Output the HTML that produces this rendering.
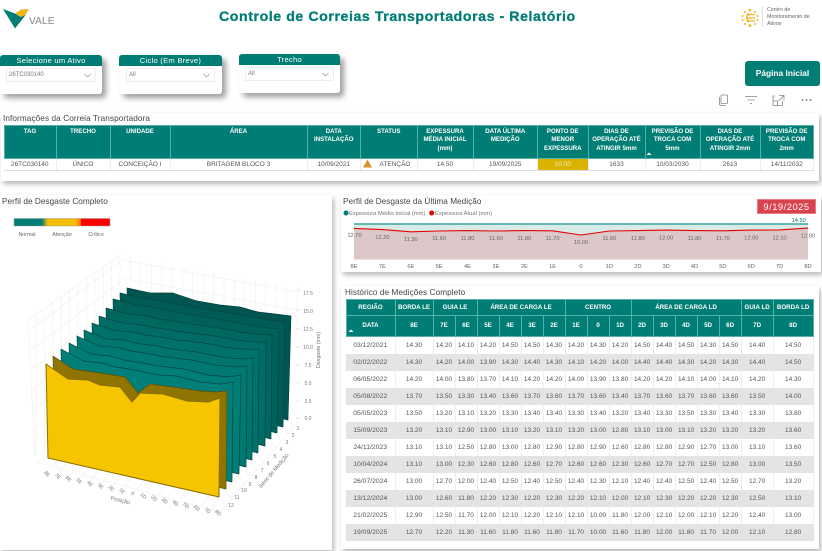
<!DOCTYPE html>
<html lang="pt"><head><meta charset="utf-8"><title>Controle de Correias Transportadoras</title>
<style>
*{box-sizing:border-box}
html,body{margin:0;padding:0;width:822px;height:551px;overflow:hidden;background:#fff}
body{font-family:"Liberation Sans",sans-serif;color:#555}
#r{position:absolute;left:0;top:0;width:822px;height:551px;overflow:hidden;filter:blur(.35px)}
.a{position:absolute;white-space:nowrap}
.card{position:absolute;background:#fff;box-shadow:2px 3px 5px rgba(0,0,0,.28)}
.sl{position:absolute;background:#fff;border-radius:3px;box-shadow:4px 4px 6px rgba(0,0,0,.38);overflow:hidden}
.sl .h{height:11px;background:#007e75;color:#fff;font-size:7.6px;line-height:11px;text-align:center;letter-spacing:.25px}
.sl .d{position:absolute;left:6px;width:90px;top:13px;height:14px;border:1px solid #eee;font-size:6px;line-height:13px;padding-left:2px;color:#777}
.sl svg{position:absolute;right:4px;top:4px}
.t{font-size:8.2px;color:#444}
table{position:absolute;border-collapse:collapse;table-layout:fixed;font-size:6.5px;text-align:center;color:#555}
th{background:#007e75;color:#fff;font-weight:bold;padding:0;border:1px solid #55b0a8;line-height:8.4px;overflow:hidden}
td{padding:0;overflow:hidden;white-space:nowrap}
#t1 th{vertical-align:top;padding-top:2px;font-size:6.1px}
#t1 td{border-right:1px solid #eee;border-bottom:1px solid #ddd;height:12px}
#t2 th{font-size:6.2px;line-height:8px}
#t2 td{border-right:1px solid #eee;height:17px}
#t2 td:first-child{font-size:6.8px}
#t2 tr.g td{background:#e4e4e4;border-right-color:#e4e4e4}
</style></head><body><div id="r">

<svg class="a" style="left:0;top:0" width="60" height="32"><polygon points="3,9 15,13.5 21,17 15,28.5" fill="#007e75"/><polygon points="15,13.5 21,9.5 29,9 25.5,15 21,17" fill="#f0b51c"/><polygon points="21,17 25.5,15 15,28.5" fill="#00665f"/></svg>
<div class="a" style="left:29px;top:16px;font-size:10px;line-height:12px;color:#888;letter-spacing:.2px">VALE</div>
<div class="a" style="left:219px;top:9px;font-size:14.2px;line-height:17px;font-weight:bold;color:#007e75;letter-spacing:.55px;-webkit-text-stroke:.3px #007e75">Controle de Correias Transportadoras - Relatório</div>

<svg class="a" style="left:738px;top:5px" width="30" height="24"><g fill="#f0b51c"><circle cx="12" cy="5" r="1.3"/><circle cx="7" cy="7" r="1"/><circle cx="17" cy="7" r="1"/><circle cx="4.5" cy="11" r="1"/><circle cx="4.5" cy="15" r="1"/><circle cx="7" cy="19" r="1"/><circle cx="12" cy="20.5" r="1.4"/><circle cx="17" cy="19" r="1"/><circle cx="19.5" cy="11" r="1"/><circle cx="19.5" cy="15" r="1"/><circle cx="10" cy="9.5" r="1.3"/><circle cx="10" cy="16" r="1.3"/></g><path d="M17 9.5H10Q7.5 13 10 16H17M9 13H17" stroke="#f0b51c" stroke-width="1.3" fill="none"/><line x1="24.5" y1="2" x2="24.5" y2="22" stroke="#ddd"/></svg>
<div class="a" style="left:767px;top:7px;font-size:5.3px;line-height:7.2px;color:#666">Centro de<br>Monitoramento de<br>Ativos</div>

<div class="sl" style="left:0;top:55px;width:102px;height:39px"><div class="h">Selecione um Ativo</div><div class="d">26TC030140<svg width="7" height="5"><path d="M.5 1L3.5 4L6.5 1" stroke="#888" stroke-width=".6" fill="none"/></svg></div></div>
<div class="sl" style="left:119px;top:55px;width:103px;height:39px"><div class="h">Ciclo (Em Breve)</div><div class="d" style="left:7px;width:89px">All<svg width="7" height="5"><path d="M.5 1L3.5 4L6.5 1" stroke="#888" stroke-width=".6" fill="none"/></svg></div></div>
<div class="sl" style="left:239px;top:54px;width:101px;height:39px"><div class="h">Trecho</div><div class="d" style="width:89px">All<svg width="7" height="5"><path d="M.5 1L3.5 4L6.5 1" stroke="#888" stroke-width=".6" fill="none"/></svg></div></div>

<div class="a" style="left:745px;top:61px;width:75px;height:25px;background:#007e75;border-radius:3px;color:#fff;font-weight:bold;font-size:8.4px;line-height:25px;text-align:center">Página Inicial</div>

<svg class="a" style="left:715px;top:92px" width="100" height="16" fill="none" stroke="#888" stroke-width=".8"><rect x="6" y="3" width="6.5" height="8.5" rx="1"/><path d="M4.5 5V11.5Q4.5 13.5 6.5 13.5H11"/><path d="M30 4.5H42M32.5 8H39.5M35 11.5H37"/><path d="M60 4H58V13.5H67.500V9M58 9H62.500V13.500M64 3.500H69V8.500M69 3.500L63.500 9"/><g fill="#888" stroke="none"><circle cx="87.500" cy="8" r="1"/><circle cx="91.500" cy="8" r="1"/><circle cx="95.500" cy="8" r="1"/></g></svg>

<div class="card" style="left:1px;top:113px;width:818px;height:68px"></div>
<div class="a t" style="left:3px;top:114px;line-height:10px;letter-spacing:.1px">Informações da Correia Transportadora</div>
<table id="t1" style="left:3.5px;top:125px;width:809.500px"><colgroup><col style="width:52px"><col style="width:54px"><col style="width:60px"><col style="width:137px"><col style="width:53.500px"><col style="width:56.500px"><col style="width:56px"><col style="width:64.500px"><col style="width:50.500px"><col style="width:57px"><col style="width:55px"><col style="width:60px"><col style="width:53.500px"></colgroup>
<tr style="height:32.500px"><th>TAG</th><th>TRECHO</th><th>UNIDADE</th><th>ÁREA</th><th>DATA<br>INSTALAÇÃO</th><th>STATUS</th><th>EXPESSURA<br>MÉDIA INICIAL<br>(mm)</th><th>DATA ÚLTIMA<br>MEDIÇÃO</th><th>PONTO DE<br>MENOR<br>EXPESSURA</th><th>DIAS DE<br>OPERAÇÃO ATÉ<br>ATINGIR 5mm</th><th>PREVISÃO DE<br>TROCA COM<br>5mm</th><th>DIAS DE<br>OPERAÇÃO ATÉ<br>ATINGIR 2mm</th><th>PREVISÃO DE<br>TROCA COM<br>2mm</th></tr>
<tr><td>26TC030140</td><td>ÚNICO</td><td>CONCEIÇÃO I</td><td>BRITAGEM BLOCO 3</td><td>10/09/2021</td><td style="text-align:right;padding-right:6px">ATENÇÃO</td><td>14.50</td><td>19/09/2025</td><td style="background:#d8b400;color:#f6ecc0">10.00</td><td>1633</td><td>10/03/2030</td><td>2613</td><td>14/11/2032</td></tr></table>
<svg class="a" style="left:363px;top:159px" width="10" height="9"><polygon points="4.500,.5 9,8.500 0,8.500" fill="#d9932a"/></svg>
<svg class="a" style="left:646px;top:152px" width="6" height="4"><polygon points="3,.5 5.500,3 .5,3" fill="#fff"/></svg>

<div class="card" style="left:0;top:195px;width:332px;height:355px"></div>
<div class="a t" style="left:2px;top:197px;line-height:10px;letter-spacing:.06px">Perfil de Desgaste Completo</div>

<svg class="a" style="left:0;top:195px" width="332" height="355" viewBox="0 195 332 355">
<defs><linearGradient id="lg"><stop offset=".29" stop-color="#007e75"/><stop offset=".35" stop-color="#f5bf00"/><stop offset=".64" stop-color="#f5bf00"/><stop offset=".7" stop-color="#ff6a00"/><stop offset=".7" stop-color="#ff0000"/><stop offset="1" stop-color="#ff0000"/></linearGradient></defs>
<rect x="14" y="218.500" width="96" height="7.500" fill="url(#lg)" stroke="#999" stroke-width=".5"/>
<g font-size="5.300" fill="#666" text-anchor="middle" font-family="Liberation Sans,sans-serif"><text x="27" y="236">Normal</text><text x="62" y="236">Atenção</text><text x="96" y="236">Crítico</text></g>
<g stroke="#efefef" stroke-width=".6" fill="none">
<path d="M120 255V330M130.400 257V330M140.800 259V330M151.200 261V330M161.600 263V330M172 265V330M182.400 267V330M192.800 269V330M203.200 271V330M213.600 272.500V330M224 274V330M234.400 276V330M244.800 278V330M255.200 280V330M265.600 281.500V330M276 283V330M286.400 285V330M297 287V330"/>
<path d="M122 260L297 292M122 278L297 310M122 297L297 329"/>
<path d="M120 255L28 320M111.600 261L111.600 400M103.200 267V400M94.800 273V400M86.400 279V400M78 285V420M69.600 291V420M61.200 297V440M52.800 303V440M44.400 309V450M36 315V455M28 320L35 458"/>
<path d="M120 262L30 330M120 282L31 350M120 302L31 370M120 320L32 390M120 340L33 410M120 360L34 430"/>
<path d="M35 462L220 512L300 420M45 450L60 470M35 462L48 458"/>
<path d="M44 474L58 460M55 477L68 462M66 479L78 465M77 482L90 468M88 484L100 470M99 487L110 473M110 490L120 476M121 492L132 478M132 495L143 481M143 497L154 483M154 500L165 486M165 502L176 488M176 505L187 491M187 507L198 493M198 510L209 496M209 512L218 498"/>
<path d="M220 512L212 505M226 505L218 498M232 498L224 491M239 491L231 484M245 484L238 477M251 477L245 470M257 470L251 463M263 463L258 456M270 456L265 449M276 449L271 442M282 442L277 435M288 435L283 428M294 427L290 422"/>
<path d="M297 290H300M296 310H300M296 329H300M296 347H300M296 365H300M296 383H300M296 401H300M296 418H300" stroke="#ccc"/>
</g>
<g stroke-linejoin="round" stroke="#004540" stroke-width=".65">
<polygon fill="#005550" points="127,288 150,293 173,293 197,301 220,305 240,307 258,312 275,314 291,316 288,420 129,381"/>
<polygon fill="#005a55" points="120,293 141,298 160,300.800 173,303.300 191,306.400 202,308.500 214,310.400 231,313 254,317.400 273,320.600 285,322 283,427 122,388"/>
<polygon fill="#00605a" points="113,299 135,304.600 153,307.400 166,310 184,313.300 196,315.500 208,317.500 224,320 247,324.700 267,327.800 279,329 277,433 115,394"/>
<polygon fill="#006660" points="106,308 128,314 146,316 159,319 177,321.600 189,323.700 201,325.400 217,327.600 240,332 260,334.400 272,335 271,439 108,400"/>
<polygon fill="#006c65" points="99,316 121,322.700 139,324.600 152,327.300 171,330 182.500,332 194,333.500 211,335.500 234,339.800 254,342 266,342 265,446 101,407"/>
<polygon fill="#00716a" points="92,323 114,330.600 132,332 145,335 164,337.600 175.500,340 187,341 204,343 227,347.500 247,349.500 259,349 258,453 94,414"/>
<polygon fill="#00756e" points="84,330 106,339 125,340 138,343.500 157,346 168.500,348.500 180,350 197,352 221,357 241,359 253,358 252,460 86,421"/>
<polygon fill="#007972" points="77,336 99,346 118,347.600 131,351 150,354 162,356.500 174,358 191,360 215,365 235,367 247,366 246,467 79,428"/>
<polygon fill="#007d75" points="69,343 91,354 110,356 124,360 143,363 155,365.500 167,367 184,369 208,375 229,377 241,375 239,474 71,435"/>
<polygon fill="#008078" points="61,349 83.400,361 102,363 116,367 135,370 147,373 159,375 176,376 200,382 221,384 233,382 232,482 63,443"/>
<polygon fill="#8f7400" stroke="#5e4c00" points="53,356 73,369 93,372 113,375 125,377 138,393 150,384 173,387 200,391 215,392 227,391 226,489 55,450"/>
<polygon fill="#f6c500" stroke="#8a6d00" stroke-width="1" points="46,364 68,379 88,380 100,385 120,387 132,402 140,393 163,394 187,401 208,402 220,398 219,497 48,458"/>
</g>
<g font-size="5" fill="#777" text-anchor="middle" font-family="Liberation Sans,sans-serif">
<text x="308" y="295">17.5</text><text x="308" y="313">15.0</text><text x="308" y="331">12.5</text><text x="308" y="349">10.0</text><text x="308" y="367">7.5</text><text x="308" y="385">5.0</text><text x="308" y="403">2.5</text><text x="308" y="420">0.0</text>
<text transform="translate(320,350) rotate(-90)" font-size="5.300">Desgaste (mm)</text>
<text x="298" y="430">1</text><text x="293" y="437">2</text><text x="287" y="444">3</text><text x="281" y="451">4</text><text x="275" y="458">5</text><text x="268" y="465">6</text><text x="262" y="472">7</text><text x="256" y="479">8</text><text x="250" y="486">9</text><text x="244" y="492">10</text><text x="237" y="499">11</text><text x="231" y="507">12</text>
<text transform="translate(275,472) rotate(-50)" font-size="5.600">Série de Medição</text>
<text transform="translate(120,502) rotate(14)" font-size="5.600">Posição</text>
<text transform="translate(46,475) rotate(45)">8E</text><text transform="translate(56.700,477.400) rotate(45)">7E</text><text transform="translate(67.400,479.900) rotate(45)">6E</text><text transform="translate(78.100,482.300) rotate(45)">5E</text><text transform="translate(88.800,484.800) rotate(45)">4E</text><text transform="translate(99.500,487.200) rotate(45)">3E</text><text transform="translate(110.200,489.600) rotate(45)">2E</text><text transform="translate(120.900,492.100) rotate(45)">1E</text><text transform="translate(131.500,494.500) rotate(45)">0</text><text transform="translate(142.200,497) rotate(45)">1D</text><text transform="translate(152.900,499.400) rotate(45)">2D</text><text transform="translate(163.600,501.900) rotate(45)">3D</text><text transform="translate(174.300,504.300) rotate(45)">4D</text><text transform="translate(185,506.700) rotate(45)">5D</text><text transform="translate(195.700,509.200) rotate(45)">6D</text><text transform="translate(206.400,511.600) rotate(45)">7D</text><text transform="translate(217,514) rotate(45)">8D</text>
</g>
</svg>

<div class="card" style="left:341px;top:195px;width:480px;height:77px"></div>
<div class="a t" style="left:343px;top:197px;line-height:10px;letter-spacing:.04px">Perfil de Desgaste da Última Medição</div>
<svg class="a" style="left:341px;top:208px" width="160" height="10"><circle cx="5" cy="5" r="2.500" fill="#007e75"/><circle cx="90.700" cy="5" r="2.500" fill="#e60000"/><g font-size="5.800" fill="#777" font-family="Liberation Sans,sans-serif"><text x="8" y="7">Expessura Média Inicial (mm)</text><text x="94" y="7">Expessura Atual (mm)</text></g></svg>
<div class="a" style="left:757px;top:199px;width:59px;height:15px;background:#d9434f;color:#fff;font-size:9.400px;line-height:13px;text-align:center;letter-spacing:.5px;border:1px solid #e27b84">9/19/2025</div>
<svg class="a" style="left:341px;top:216px" width="480" height="56" viewBox="341 216 480 56" font-family="Liberation Sans,sans-serif">
<polygon fill="#d8ebe9" points="354,224 808,224 808,228.100 354,228.400"/>
<polygon fill="#dcc8c8" points="354,228.400 382.400,229.600 410.800,231.800 439.100,231 467.500,230.600 495.900,231 524.300,230.600 552.600,230.800 581,235 609.400,231 637.800,230.600 666.100,230.100 694.500,230.600 722.900,230.800 751.300,230.100 779.600,229.900 808,228.100 808,259.500 354,259.500"/>
<polygon fill="#d8ebe9" points="354,224 808,224 808,228.100 779.600,229.900 751.300,230.100 722.900,230.800 694.500,230.600 666.100,230.100 637.800,230.600 609.400,231 581,235 552.600,230.800 524.300,230.600 495.900,231 467.500,230.600 439.100,231 410.800,231.800 382.400,229.600 354,228.400"/>
<line x1="354" y1="224" x2="808" y2="224" stroke="#3aa79e" stroke-width="1.500"/>
<polyline fill="none" stroke="#e60000" stroke-width="1.100" points="354,228.400 382.400,229.600 410.800,231.800 439.100,231 467.500,230.600 495.900,231 524.300,230.600 552.600,230.800 581,235 609.400,231 637.800,230.600 666.100,230.100 694.500,230.600 722.900,230.800 751.300,230.100 779.600,229.900 808,228.100"/>
<g font-size="5.700" fill="#666" text-anchor="middle">
<text x="354.500" y="237">12.70</text><text x="382.400" y="239">12.20</text><text x="410.800" y="241">11.30</text><text x="439.100" y="240">11.60</text><text x="467.500" y="240">11.80</text><text x="495.900" y="240">11.60</text><text x="524.300" y="240">11.80</text><text x="552.600" y="240">11.70</text><text x="581" y="244">10.00</text><text x="609.400" y="240">11.60</text><text x="637.800" y="240">11.80</text><text x="666.100" y="239.500">12.00</text><text x="694.500" y="240">11.80</text><text x="722.900" y="240">11.70</text><text x="751.300" y="239.500">12.00</text><text x="779.600" y="239.500">12.10</text><text x="808" y="237.500">12.80</text>
<text x="798.700" y="222" fill="#007e75">14.50</text>
<text x="354" y="268">8E</text><text x="382.400" y="268">7E</text><text x="410.800" y="268">6E</text><text x="439.100" y="268">5E</text><text x="467.500" y="268">4E</text><text x="495.900" y="268">3E</text><text x="524.300" y="268">2E</text><text x="552.600" y="268">1E</text><text x="581" y="268">0</text><text x="609.400" y="268">1D</text><text x="637.800" y="268">2D</text><text x="666.100" y="268">3D</text><text x="694.500" y="268">4D</text><text x="722.900" y="268">5D</text><text x="751.300" y="268">6D</text><text x="779.600" y="268">7D</text><text x="808" y="268">8D</text>
</g></svg>

<div class="card" style="left:341px;top:286px;width:478px;height:263px"></div>
<div class="a t" style="left:345px;top:288px;line-height:10px;letter-spacing:.08px">Histórico de Medições Completo</div>
<table id="t2" style="left:345.500px;top:299px;width:467px"><colgroup><col style="width:49px"><col style="width:38px"><col span="14" style="width:22px"><col style="width:32px"><col style="width:40px"></colgroup>
<tr style="height:16px"><th>REGIÃO</th><th>BORDA LE</th><th colspan="2">GUIA LE</th><th colspan="4">ÁREA DE CARGA LE</th><th colspan="3">CENTRO</th><th colspan="5">ÁREA DE CARGA LD</th><th>GUIA LD</th><th>BORDA LD</th></tr>
<tr style="height:21px"><th>DATA</th><th>8E</th><th>7E</th><th>6E</th><th>5E</th><th>4E</th><th>3E</th><th>2E</th><th>1E</th><th>0</th><th>1D</th><th>2D</th><th>3D</th><th>4D</th><th>5D</th><th>6D</th><th>7D</th><th>8D</th></tr>
<tr><td>03/12/2021</td><td>14.30</td><td>14.20</td><td>14.10</td><td>14.20</td><td>14.50</td><td>14.50</td><td>14.30</td><td>14.20</td><td>14.30</td><td>14.20</td><td>14.50</td><td>14.40</td><td>14.50</td><td>14.30</td><td>14.50</td><td>14.40</td><td>14.50</td></tr>
<tr class="g"><td>02/02/2022</td><td>14.30</td><td>14.20</td><td>14.00</td><td>13.90</td><td>14.30</td><td>14.40</td><td>14.30</td><td>14.10</td><td>14.20</td><td>14.00</td><td>14.40</td><td>14.40</td><td>14.30</td><td>14.20</td><td>14.30</td><td>14.40</td><td>14.50</td></tr>
<tr><td>06/05/2022</td><td>14.20</td><td>14.00</td><td>13.80</td><td>13.70</td><td>14.10</td><td>14.20</td><td>14.20</td><td>14.00</td><td>13.90</td><td>13.80</td><td>14.20</td><td>14.20</td><td>14.10</td><td>14.00</td><td>14.10</td><td>14.20</td><td>14.30</td></tr>
<tr class="g"><td>05/08/2022</td><td>13.70</td><td>13.50</td><td>13.30</td><td>13.40</td><td>13.60</td><td>13.70</td><td>13.60</td><td>13.70</td><td>13.60</td><td>13.40</td><td>13.70</td><td>13.60</td><td>13.70</td><td>13.60</td><td>13.60</td><td>13.50</td><td>14.00</td></tr>
<tr><td>05/05/2023</td><td>13.50</td><td>13.20</td><td>13.10</td><td>13.20</td><td>13.30</td><td>13.40</td><td>13.40</td><td>13.30</td><td>13.40</td><td>13.20</td><td>13.40</td><td>13.30</td><td>13.50</td><td>13.30</td><td>13.40</td><td>13.30</td><td>13.80</td></tr>
<tr class="g"><td>15/09/2023</td><td>13.20</td><td>13.10</td><td>12.90</td><td>13.00</td><td>13.10</td><td>13.20</td><td>13.10</td><td>13.20</td><td>13.00</td><td>12.80</td><td>13.10</td><td>13.00</td><td>13.10</td><td>13.20</td><td>13.20</td><td>13.20</td><td>13.60</td></tr>
<tr><td>24/11/2023</td><td>13.10</td><td>13.10</td><td>12.50</td><td>12.80</td><td>13.00</td><td>12.80</td><td>12.90</td><td>12.80</td><td>12.90</td><td>12.60</td><td>12.80</td><td>12.80</td><td>12.90</td><td>12.70</td><td>13.00</td><td>13.10</td><td>13.60</td></tr>
<tr class="g"><td>10/04/2024</td><td>13.10</td><td>13.00</td><td>12.30</td><td>12.60</td><td>12.80</td><td>12.60</td><td>12.70</td><td>12.60</td><td>12.60</td><td>12.30</td><td>12.60</td><td>12.70</td><td>12.70</td><td>12.50</td><td>12.80</td><td>13.00</td><td>13.50</td></tr>
<tr><td>26/07/2024</td><td>13.00</td><td>12.70</td><td>12.00</td><td>12.40</td><td>12.50</td><td>12.40</td><td>12.50</td><td>12.40</td><td>12.30</td><td>12.10</td><td>12.40</td><td>12.40</td><td>12.50</td><td>12.40</td><td>12.50</td><td>12.70</td><td>13.20</td></tr>
<tr class="g"><td>13/12/2024</td><td>13.00</td><td>12.60</td><td>11.80</td><td>12.20</td><td>12.30</td><td>12.20</td><td>12.30</td><td>12.20</td><td>12.10</td><td>12.00</td><td>12.10</td><td>12.30</td><td>12.20</td><td>12.20</td><td>12.30</td><td>12.50</td><td>13.10</td></tr>
<tr><td>21/02/2025</td><td>12.90</td><td>12.50</td><td>11.70</td><td>12.00</td><td>12.10</td><td>12.20</td><td>12.10</td><td>12.10</td><td>10.00</td><td>11.80</td><td>12.00</td><td>12.10</td><td>12.00</td><td>12.10</td><td>12.20</td><td>12.40</td><td>13.00</td></tr>
<tr class="g"><td>19/09/2025</td><td>12.70</td><td>12.20</td><td>11.30</td><td>11.60</td><td>11.80</td><td>11.60</td><td>11.80</td><td>11.70</td><td>10.00</td><td>11.60</td><td>11.80</td><td>12.00</td><td>11.80</td><td>11.70</td><td>12.00</td><td>12.10</td><td>12.80</td></tr>
</table>
<svg class="a" style="left:348px;top:329px" width="6" height="4"><polygon points="3,.5 5.500,3 .5,3" fill="#fff"/></svg>
</div></body></html>
